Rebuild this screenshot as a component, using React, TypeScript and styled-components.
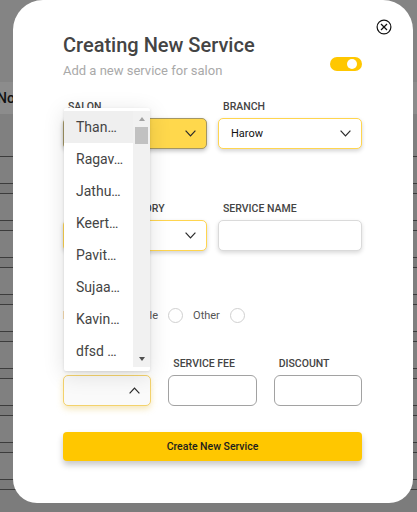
import React from "react";
import styled, { createGlobalStyle, css } from "styled-components";

const GlobalStyle = createGlobalStyle`
  html, body { margin: 0; padding: 0; }
  body {
    font-family: Roboto, "Liberation Sans", Arial, sans-serif;
    background: #808080;
    overflow: hidden;
  }
  * { box-sizing: border-box; }
`;

const Screen = styled.div`
  position: relative;
  width: 417px;
  height: 512px;
  overflow: hidden;
  background: #7c7c7c;
`;

/* ---------- dimmed page behind the dialog ---------- */
const Page = styled.div`
  display: flex;
  flex-direction: column;
  height: 100%;
`;
const PageTop = styled.div`
  height: 82px;
  background: #848484;
`;
const PageHead = styled.div`
  height: 32px;
  display: flex;
  align-items: center;
  background: #8c8c8c;
  font: 500 14px Roboto, sans-serif;
  color: #111;
  span { margin-left: -3px; }
`;
const PageFilter = styled.div`
  height: 43px;
  background: #808080;
  border-bottom: 1px solid #3c3c3c;
`;
const TableRow = styled.div`
  height: 37px;
  display: flex;
  flex-direction: column;
  justify-content: flex-end;
  background: #808080;
`;
const RowBand = styled.div`
  height: 11px;
  background: #7a7a7a;
  border-top: 1px solid #3c3c3c;
  border-bottom: 1px solid #3c3c3c;
`;

/* ---------- dialog ---------- */
const Modal = styled.div`
  position: absolute;
  left: 13px;
  top: 0;
  width: 400px;
  height: 503px;
  background: #fff;
  border-radius: 30px 30px 24px 24px;
  padding: 33px 51px 0 50px;
  display: flex;
  flex-direction: column;
`;

const CloseButton = styled.button`
  position: absolute;
  top: 19px;
  right: 21px;
  width: 16px;
  height: 16px;
  padding: 0;
  border: 0;
  background: none;
  display: flex;
`;

const Header = styled.div`
  display: flex;
  justify-content: space-between;
  align-items: flex-end;
`;
const TitleBlock = styled.div`
  display: flex;
  flex-direction: column;
`;
const Title = styled.h1`
  margin: 0;
  font: 500 20px/24px Roboto, sans-serif;
  color: #444;
`;
const Subtitle = styled.p`
  margin: 6px 0 0;
  font: 400 13px/16px Roboto, sans-serif;
  color: #a9a9a9;
`;
const Toggle = styled.div`
  width: 32px;
  height: 14px;
  margin-bottom: 8px;
  border-radius: 7px;
  background: #ffc700;
  display: flex;
  align-items: center;
  justify-content: flex-end;
  padding-right: 5px;
`;
const Knob = styled.span`
  width: 10px;
  height: 10px;
  border-radius: 50%;
  background: #fff;
`;

const Grid = styled.div<{ $cols: number; $gap: number; $top: number }>`
  display: grid;
  grid-template-columns: repeat(${(p) => p.$cols}, 1fr);
  column-gap: ${(p) => p.$gap}px;
  margin-top: ${(p) => p.$top}px;
`;
const Field = styled.div<{ $top?: number }>`
  display: flex;
  flex-direction: column;
  margin-top: ${(p) => p.$top ?? 0}px;
`;
const Label = styled.label`
  font: 500 10.5px/13px Roboto, sans-serif;
  color: #444;
  text-transform: uppercase;
  padding-left: 5px;
  margin-bottom: 5px;
  white-space: nowrap;
`;

type BoxVariant = "active" | "yellow" | "plain" | "outline" | "open";
const variants: Record<BoxVariant, ReturnType<typeof css>> = {
  active: css`
    background: #ffd84c;
    border: 1px solid #a39665;
    box-shadow: 0 2px 4px rgba(0, 0, 0, 0.25);
  `,
  yellow: css`
    background: #fff;
    border: 1px solid #ffd54f;
    box-shadow: 0 2px 4px rgba(0, 0, 0, 0.18);
  `,
  plain: css`
    background: #fff;
    border: 1px solid #dadada;
    box-shadow: 0 2px 4px rgba(0, 0, 0, 0.15);
  `,
  outline: css`
    background: #fff;
    border: 1px solid #a2a2a2;
    border-radius: 6px;
  `,
  open: css`
    background: #fafafa;
    border: 1px solid #f3d26c;
    box-shadow: 0 3px 6px rgba(225, 185, 60, 0.35);
  `,
};

const Box = styled.div<{ $variant: BoxVariant }>`
  position: relative;
  height: 31px;
  border-radius: 5px;
  display: flex;
  align-items: center;
  justify-content: space-between;
  padding: 0 10px 0 12px;
  font: 400 11px Roboto, sans-serif;
  color: #111;
  ${(p) => variants[p.$variant]}
`;

const RadioGroup = styled.div`
  display: flex;
  align-items: center;
  gap: 10px;
  height: 16px;
`;
const RadioText = styled.span`
  font: 400 11px Roboto, sans-serif;
  color: #555;
`;
const RadioCircle = styled.span`
  width: 15px;
  height: 15px;
  border-radius: 50%;
  border: 1px solid #d0d0d0;
  background: #fff;
`;

const SubmitButton = styled.button`
  margin-top: 26px;
  height: 29px;
  border: 0;
  border-radius: 4px;
  background: #ffc700;
  box-shadow: 0 4px 6px rgba(0, 0, 0, 0.22);
  font: 500 10.5px Roboto, sans-serif;
  color: #1d1d1d;
`;

/* ---------- open native list ---------- */
const ListPopup = styled.div`
  position: absolute;
  left: 0;
  right: 0;
  bottom: calc(100% + 5px);
  background: #fff;
  border-radius: 2px;
  padding: 3px 0 4px;
  display: flex;
  box-shadow: 0 4px 22px rgba(0, 0, 0, 0.12), 0 1px 3px rgba(0, 0, 0, 0.12);
  z-index: 2;
`;
const ListItems = styled.div`
  flex: 1;
  display: flex;
  flex-direction: column;
`;
const ListItem = styled.div<{ $selected?: boolean }>`
  height: 32px;
  line-height: 32px;
  padding-left: 12px;
  font: 400 14px/32px Roboto, sans-serif;
  color: #444;
  white-space: nowrap;
  background: ${(p) => (p.$selected ? "#efefef" : "transparent")};
`;
const ScrollTrack = styled.div`
  width: 17px;
  background: #f1f1f1;
  display: flex;
  flex-direction: column;
`;
const ScrollArrow = styled.div<{ $dir: "up" | "down" }>`
  height: 16px;
  display: flex;
  align-items: center;
  justify-content: center;
  &::before {
    content: "";
    width: 0;
    height: 0;
    border-left: 3.5px solid transparent;
    border-right: 3.5px solid transparent;
    ${(p) =>
      p.$dir === "up"
        ? css`border-bottom: 4px solid #a3a3a3;`
        : css`border-top: 4px solid #505050;`}
  }
`;
const ScrollThumb = styled.div`
  height: 17px;
  margin: 0 2px;
  background: #c1c1c1;
`;
const ScrollSpace = styled.div`
  flex: 1;
`;

const Chevron = ({ up = false }: { up?: boolean }) => (
  <svg width="11" height="7" viewBox="0 0 11 7">
    <polyline
      points={up ? "0.6,6.4 5.5,1.2 10.4,6.4" : "0.6,0.6 5.5,5.8 10.4,0.6"}
      fill="none"
      stroke="#2a2a2a"
      strokeWidth="1.2"
    />
  </svg>
);

const names = ["Than…", "Ragav…", "Jathu…", "Keert…", "Pavit…", "Sujaa…", "Kavin…", "dfsd …"];

export default function App() {
  return (
    <>
      <GlobalStyle />
      <Screen>
        <Page>
          <PageTop />
          <PageHead>
            <span>No</span>
          </PageHead>
          <PageFilter />
          {Array.from({ length: 9 }).map((_, i) => (
            <TableRow key={i}>
              <RowBand />
            </TableRow>
          ))}
        </Page>

        <Modal>
          <CloseButton aria-label="close">
            <svg width="16" height="16" viewBox="0 0 16 16">
              <circle cx="8" cy="8" r="6.9" fill="none" stroke="#111" strokeWidth="1.2" />
              <line x1="5" y1="5" x2="11" y2="11" stroke="#111" strokeWidth="1.2" />
              <line x1="11" y1="5" x2="5" y2="11" stroke="#111" strokeWidth="1.2" />
            </svg>
          </CloseButton>

          <Header>
            <TitleBlock>
              <Title>Creating New Service</Title>
              <Subtitle>Add a new service for salon</Subtitle>
            </TitleBlock>
            <Toggle>
              <Knob />
            </Toggle>
          </Header>

          <Grid $cols={2} $gap={11} $top={21}>
            <Field>
              <Label>Salon</Label>
              <Box $variant="active">
                <span />
                <Chevron />
              </Box>
            </Field>
            <Field>
              <Label>Branch</Label>
              <Box $variant="yellow">
                <span>Harow</span>
                <Chevron />
              </Box>
            </Field>
          </Grid>

          <Grid $cols={2} $gap={11} $top={53}>
            <Field>
              <Label>Service Category</Label>
              <Box $variant="yellow">
                <span />
                <Chevron />
              </Box>
            </Field>
            <Field>
              <Label>Service Name</Label>
              <Box $variant="plain" />
            </Field>
          </Grid>

          <Field $top={38}>
            <Label>Gender</Label>
            <RadioGroup>
              <RadioText>Male</RadioText>
              <RadioCircle />
              <RadioText>Female</RadioText>
              <RadioCircle />
              <RadioText>Other</RadioText>
              <RadioCircle />
            </RadioGroup>
          </Field>

          <Grid $cols={3} $gap={17} $top={34}>
            <Field>
              <Label>Duration</Label>
              <Box $variant="open">
                <span />
                <Chevron up />
                <ListPopup>
                  <ListItems>
                    {names.map((n, i) => (
                      <ListItem key={n} $selected={i === 0}>
                        {n}
                      </ListItem>
                    ))}
                  </ListItems>
                  <ScrollTrack>
                    <ScrollArrow $dir="up" />
                    <ScrollThumb />
                    <ScrollSpace />
                    <ScrollArrow $dir="down" />
                  </ScrollTrack>
                </ListPopup>
              </Box>
            </Field>
            <Field>
              <Label>Service Fee</Label>
              <Box $variant="outline" />
            </Field>
            <Field>
              <Label>Discount</Label>
              <Box $variant="outline" />
            </Field>
          </Grid>

          <SubmitButton>Create New Service</SubmitButton>
        </Modal>
      </Screen>
    </>
  );
}
